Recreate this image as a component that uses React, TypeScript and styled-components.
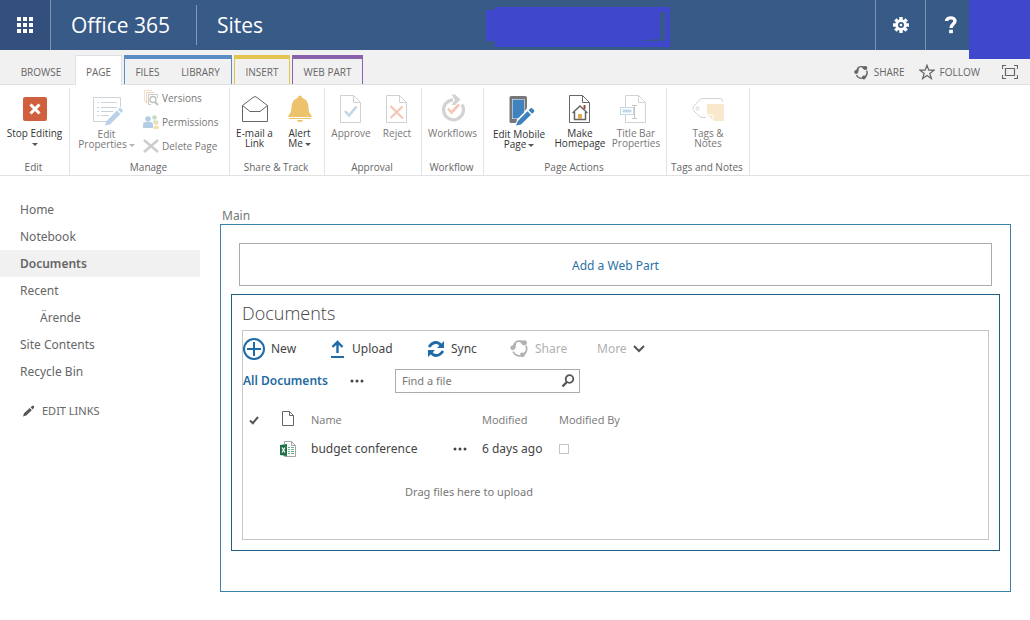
import React from "react";
import styled, { createGlobalStyle, css } from "styled-components";

const GlobalStyle = createGlobalStyle`
  * { box-sizing: border-box; }
  body {
    margin: 0;
    background: #fff;
    color: #666;
    font: 12px/16px "Noto Sans", "Open Sans", sans-serif;
  }
  button, input { font: inherit; color: inherit; }
  button { background: none; border: 0; padding: 0; cursor: pointer; white-space: nowrap; }
  a { color: inherit; text-decoration: none; }
  ul { list-style: none; margin: 0; padding: 0; }
  svg { display: block; flex: none; }
`;

const uiFont = `"Open Sans", "Noto Sans", sans-serif`;

/* ---------- suite bar ---------- */
const SuiteBar = styled.header`
  position: relative;
  display: flex;
  align-items: center;
  height: 50px;
  background: #385a87;
  color: #fff;
  font-family: ${uiFont};
`;
const Launcher = styled.button`
  display: grid;
  place-items: center;
  width: 51px;
  height: 50px;
  background: #32507b;
  border-right: 1px solid #7d94b3;
`;
const Brand = styled.a`
  width: 146px;
  padding-left: 20px;
  border-right: 1px solid #8499b7;
  font-size: 21px;
  line-height: 40px;
`;
const SiteName = styled(Brand)`
  width: auto;
  border: 0;
`;
const SuiteCenter = styled.div`
  flex: 1;
  display: flex;
  justify-content: center;
  padding: 4px 0 0 18px;
`;
const SuiteButton = styled.button`
  display: grid;
  place-items: center;
  width: 50px;
  height: 50px;
  border-left: 1px solid #7d94b3;
`;
const AccountSpace = styled.div`
  width: 55px;
`;
const AccountCover = styled.div`
  position: absolute;
  top: 0;
  right: 0;
  width: 61px;
  height: 59px;
  background: #3f48cc;
`;

/* ---------- ribbon tabs ---------- */
const TabRow = styled.div`
  display: flex;
  align-items: flex-end;
  height: 35px;
  background: #f1f1f1;
  border-bottom: 1px solid #e1e1e1;
  padding-left: 7px;
  font-family: ${uiFont};
`;
const TabGroup = styled.div<{ $color?: string }>`
  display: flex;
  height: 29px;
  margin-right: 2px;
  ${(p) =>
    p.$color &&
    css`
      border: 1px solid ${p.$color};
      border-top-width: 4px;
      border-bottom: 0;
    `}
`;
const Tab = styled.button<{ $w: number; $active?: boolean; $grouped?: boolean }>`
  width: ${(p) => p.$w}px;
  height: ${(p) => (p.$active ? 30 : p.$grouped ? 25 : 29)}px;
  padding-top: ${(p) => (p.$grouped ? 1 : 5)}px;
  font-size: 10px;
  ${(p) =>
    p.$active &&
    css`
      background: #fff;
      border: 1px solid #e1e1e1;
      border-bottom: 0;
      padding-top: 3px;
    `}
`;
const PageLinks = styled.div`
  display: flex;
  align-items: center;
  gap: 14px;
  margin-left: auto;
  padding: 0 12px 4px 0;
  font-size: 10px;
`;
const PageLink = styled.button`
  display: flex;
  align-items: center;
  gap: 5px;
`;
const FocusButton = styled.button`
  margin-left: 8px;
`;

/* ---------- ribbon ---------- */
const Ribbon = styled.div`
  display: flex;
  height: 91px;
  border-bottom: 1px solid #e1e1e1;
  font-family: ${uiFont};
  font-size: 10px;
`;
const Group = styled.section<{ $w: number }>`
  display: flex;
  flex-direction: column;
  width: ${(p) => p.$w}px;
  margin-top: 3px;
  padding-top: 5px;
  border-right: 1px solid #e3e3e3;
`;
const GroupBody = styled.div<{ $start?: boolean }>`
  flex: 1;
  display: flex;
  justify-content: ${(p) => (p.$start ? "flex-start" : "center")};
  align-items: flex-start;
`;
const GroupLabel = styled.h2`
  margin: 0;
  padding-right: 2px;
  font-size: 10px;
  font-weight: 400;
  line-height: 16px;
  text-align: center;
  white-space: nowrap;
`;
const LargeButton = styled.button<{ $w: number; $off?: boolean }>`
  display: flex;
  flex-direction: column;
  align-items: center;
  gap: 3px;
  width: ${(p) => p.$w}px;
  line-height: 10px;
  color: ${(p) => (p.$off ? "#777" : "#333")};
  svg { opacity: ${(p) => (p.$off ? 0.8 : 1)}; }
`;
const Caret = styled.span<{ $off?: boolean }>`
  display: inline-block;
  margin-left: 2px;
  border: 3px solid transparent;
  border-top-color: ${(p) => (p.$off ? "#b5b5b5" : "#555")};
  border-bottom: 0;
  vertical-align: 1px;
`;
const SmallButtons = styled.div`
  display: flex;
  flex-direction: column;
  gap: 8px;
  margin-top: -3px;
`;
const SmallButton = styled.button`
  display: flex;
  align-items: center;
  gap: 3px;
  line-height: 16px;
  color: #777;
  svg { opacity: 0.85; }
`;

/* ---------- page body ---------- */
const Body = styled.div`
  display: flex;
  gap: 20px;
  padding-right: 19px;
`;
const SideNav = styled.nav`
  width: 200px;
  padding-top: 20px;
`;
const NavItem = styled.a<{ $active?: boolean; $level?: number }>`
  display: block;
  padding-left: ${(p) => (p.$level ? 40 : 20)}px;
  line-height: 27px;
  ${(p) =>
    p.$active &&
    css`
      background: #f1f1f1;
      font-weight: 600;
    `}
`;
const EditLinks = styled.button`
  display: flex;
  align-items: center;
  gap: 7px;
  margin: 18px 0 0 22px;
  font-size: 11px;
`;
const Main = styled.main`
  flex: 1;
  padding-top: 32px;
`;
const ZoneTitle = styled.h2`
  margin: 0 2px;
  font-size: 12px;
  font-weight: 400;
  color: #777;
`;
const Zone = styled.div`
  padding: 18px 10px 40px;
  border: 1px solid #3c81a8;
`;
const AddWebPart = styled.button`
  display: block;
  width: calc(100% - 16px);
  height: 43px;
  margin: 0 8px 8px;
  padding-top: 2px;
  border: 1px solid #ababab;
  color: #2a72a5;
`;
const WebPart = styled.section`
  padding: 7px 10px 10px;
  border: 1px solid #1d5f85;
`;
const WebPartTitle = styled.h1`
  margin: 0;
  font-family: ${uiFont};
  font-size: 18px;
  font-weight: 300;
  line-height: 22px;
  padding-bottom: 6px;
  color: #444;
`;
const Library = styled.div`
  min-height: 210px;
  border: 1px solid #c6c6c6;
`;
const Commands = styled.div`
  display: flex;
  align-items: center;
  height: 35px;
`;
const Command = styled.button<{ $w: number; $off?: boolean }>`
  display: flex;
  align-items: center;
  gap: 6px;
  width: ${(p) => p.$w}px;
  color: ${(p) => (p.$off ? "#b1b1b1" : "#444")};
`;
const Views = styled.div`
  display: flex;
  align-items: center;
  height: 30px;
`;
const ViewName = styled.a`
  width: 107px;
  font-weight: 600;
  color: #1f6ba0;
`;
const Dots = styled.button`
  display: block;
  width: 14px;
  color: #444;
`;
const Search = styled.form`
  display: flex;
  align-items: center;
  width: 185px;
  height: 24px;
  margin-left: 31px;
  padding: 0 4px 0 6px;
  border: 1px solid #ababab;
`;
const SearchInput = styled.input`
  flex: 1;
  min-width: 0;
  border: 0;
  padding: 0;
  outline: 0;
  background: none;
  font-size: 11px;
  &::placeholder { color: #777; opacity: 1; }
`;
const Files = styled.table`
  table-layout: fixed;
  width: 409px;
  margin-top: 10px;
  border-collapse: collapse;
  th, td { padding: 0; text-align: left; white-space: nowrap; }
  th { height: 28px; font: 400 11px/16px ${uiFont}; color: #777; }
  td { height: 30px; color: #444; }
`;
const SelectCell = styled.div`
  padding-left: 6px;
`;
const TypeCell = styled.div`
  padding: 0 0 3px 2px;
`;
const RowBox = styled.input`
  appearance: none;
  display: block;
  width: 10px;
  height: 10px;
  margin: 0;
  border: 1px solid #c6c6c6;
`;
const DropHint = styled.p`
  width: 452px;
  margin: 20px 0 0;
  font-size: 11px;
  text-align: center;
  color: #777;
`;

/* ---------- icons ---------- */
const WaffleIcon = () => (
  <svg width="16" height="16" fill="#fff">
    {[0, 6, 12].map((y) => [0, 6, 12].map((x) => <rect key={x + "-" + y} x={x} y={y} width="4" height="4" />))}
  </svg>
);
const Redaction = () => (
  <svg width="185" height="40" fill="#3f48cc">
    <path d="M9 0H184V40H9V34H0V3H9ZM174 5V32L150 34H179V5Z" fillRule="evenodd" />
  </svg>
);
const GearIcon = () => (
  <svg width="16" height="16" viewBox="-8 -8 16 16" fill="#fff">
    {[0, 45, 90, 135].map((a) => (
      <rect key={a} x="-1.7" y="-8" width="3.4" height="16" transform={`rotate(${a})`} />
    ))}
    <circle r="5.8" />
    <circle r="3" fill="#385a87" />
    <circle r="1.3" />
  </svg>
);
const HelpIcon = () => (
  <svg width="14" height="18" viewBox="0 0 14 18" fill="none" stroke="#fff" strokeWidth="3.4">
    <path d="M2.5 5C2.5 0.8 11 0.8 11 5C11 8 7 8 7 12" />
    <path d="M7 13.8V17.2" strokeWidth="3.8" />
  </svg>
);
const ShareIcon = ({ size, color }: { size: number; color: string }) => (
  <svg width={size} height={size} viewBox="0 0 18 18" fill="none" stroke={color} strokeWidth="1.6">
    <path d="M5 3.2A7 7 0 0 1 11 2.3M15.2 6.5A7 7 0 0 1 14.2 13.4M10 16A7 7 0 0 1 3 12" />
    <g fill={color} stroke="none">
      <circle cx="2.6" cy="8.4" r="2.3" />
      <circle cx="13.6" cy="3.6" r="2.4" />
      <circle cx="11.8" cy="15" r="2.3" />
      <path d="M1.5 8L4.5 2.5L6 4L5 9ZM9 1.3L14 2L12 5.5L10 3.6ZM16.2 11L14.5 15L11 14.5L13.8 12.5Z" />
    </g>
  </svg>
);
const StarIcon = () => (
  <svg width="16" height="16" viewBox="0 0 16 16" fill="none" stroke="#666" strokeWidth="1.2">
    <path d="M8 1.2L9.8 6.2H15L10.8 9.4L12.4 14.6L8 11.5L3.6 14.6L5.2 9.4L1 6.2H6.2Z" />
  </svg>
);
const FocusIcon = () => (
  <svg width="16" height="14" viewBox="0 0 16 14" fill="none" stroke="#666">
    <path d="M.5 4V.5H4M12 .5H15.5V4M15.5 10V13.5H12M4 13.5H.5V10M3.5 3.5H12.5V10.5H3.5Z" strokeWidth="1.2" />
  </svg>
);
const StopIcon = () => (
  <svg width="32" height="32">
    <rect x="4" y="4" width="24" height="24" rx="2" fill="#d0603d" />
    <path d="M11.5 11.5L20.5 20.5M20.5 11.5L11.5 20.5" stroke="#fff" strokeWidth="3" />
  </svg>
);
const EditPropertiesIcon = () => (
  <svg width="32" height="33" fill="none" stroke="#c4c8cc">
    <path d="M16 28.5H2.5V4.5H29.5V14" />
    <path d="M6 9.5H8M10 9.5H26M6 14.5H8M10 14.5H26M6 18.5H8M10 18.5H22M6 22.5H8M10 22.5H18" stroke="#b9c9d8" />
    <path d="M14 32.5L15.5 28L26 17.5L29.5 21L19 31.5Z M27 16.5L29 14.5L32 17.5L30.5 20Z" fill="#a9c6e2" stroke="none" />
  </svg>
);
const VersionsIcon = () => (
  <svg width="16" height="16" fill="none">
    <path d="M8 11.5H1.5V.5H9" stroke="#f3dfb8" />
    <path d="M3.5 13.5V2.5H11" stroke="#edc9bd" />
    <path d="M8 14.5H5.5V4.5H14.5V8" stroke="#c4c4c4" />
    <circle cx="10" cy="9.5" r="3" stroke="#b5b5b5" strokeWidth="1.3" />
    <path d="M12 12L15 15" stroke="#b5b5b5" strokeWidth="2" />
  </svg>
);
const PermissionsIcon = () => (
  <svg width="16" height="16">
    <circle cx="5" cy="5" r="2.8" fill="#a9c6e2" />
    <path d="M0 14V10Q0 8 3 8H7Q10 8 10 10V14Z" fill="#a9c6e2" />
    <circle cx="11.5" cy="3.5" r="2.3" fill="#b7d9b9" />
    <path d="M10 6.5H13Q15.5 6.500 15.500 9.500H11Z" fill="#b7d9b9" />
    <circle cx="13" cy="9.5" r="2" fill="#f5dca6" />
    <path d="M10.5 15V13Q10.5 12 12 12H14Q16 12 16 13V15Z" fill="#f5dca6" />
  </svg>
);
const DeleteIcon = () => (
  <svg width="16" height="16" stroke="#c4c4c4" strokeWidth="2.4">
    <path d="M1 2L15 14M15 2L1 14" />
  </svg>
);
const MailIcon = () => (
  <svg width="32" height="32" fill="none" stroke="#666">
    <path d="M3.5 12.5V28.5H28.5V12.5M3.5 12.5L14 4.5Q16 2.5 18 4.5L28.5 12.5L21 18.5H11Z" />
  </svg>
);
const BellIcon = () => (
  <svg width="32" height="32" fill="#ecc26c">
    <path d="M13.5 5Q14 2.5 16 2.5T18.5 5Q24 6.5 24.5 14C24.7 19 25.5 20 27.5 22.5V24H4.5V22.5C6.5 20 7.3 19 7.5 14Q8 6.5 13.5 5Z" />
    <path d="M5 25H27V26H5ZM13 27H19Q18.5 29 16 29T13 27Z" />
  </svg>
);
const PageOutline = ({ color }: { color: string }) => (
  <path d="M5.5 2.5H18.5L25.5 9.5V29.5H5.5ZM18.5 2.5V9.5H25.5" fill="none" stroke={color} />
);
const ApproveIcon = () => (
  <svg width="32" height="32" fill="none">
    <PageOutline color="#c6c6c6" />
    <path d="M10 18L14 22.5L21.5 13.5" stroke="#b4cfe0" strokeWidth="2.6" />
  </svg>
);
const RejectIcon = () => (
  <svg width="32" height="32" fill="none">
    <PageOutline color="#c6c6c6" />
    <path d="M9.5 13L22 25.5M21.5 13.5L9.5 25" stroke="#f1b8a5" strokeWidth="2.2" />
  </svg>
);
const WorkflowIcon = () => (
  <svg width="32" height="32" fill="none">
    <path d="M16 6.8A10 10 0 1 0 25 11.5" stroke="#c9c9c9" strokeWidth="3.2" />
    <path d="M14.5 1.5H18L23.500 6.500L18 12H14.500L18 7Z" fill="#c9c9c9" />
    <path d="M11 15.5L14.5 19.5L22 11.5" stroke="#f1b8a5" strokeWidth="2.6" />
  </svg>
);
const MobileIcon = () => (
  <svg width="32" height="33">
    <path d="M8 3H22Q24 3 24 5V15L13 30H8Q6.5 30 6.5 28.5V4.5Q6.5 3 8 3Z" fill="#777" />
    <rect x="9" y="6" width="12.5" height="20" fill="#fff" />
    <rect x="9.500" y="6.500" width="11.5" height="19" fill="#3f82be" />
    <path d="M12 34L14 26.5L26 14.5L32.5 20L20 31Z" fill="#fff" />
    <path d="M13 32.5L14.8 28L24.5 18.3L28 21.8L18 31.5ZM25.5 17.2L27.5 15.2Q28.5 14.5 29.5 15.5L31 17Q31.8 18 31 19L29.2 20.8Z" fill="#3f82be" />
  </svg>
);
const HomepageIcon = () => (
  <svg width="32" height="32" fill="none">
    <PageOutline color="#666" />
    <path d="M20.5 12V16" stroke="#9b4a33" strokeWidth="2" />
    <path d="M8.5 20L16 13L23.5 20M10.5 19V26.5H21.5V19" stroke="#666" strokeWidth="1.5" />
    <rect x="14" y="21" width="4" height="5" fill="#e0ab5c" />
  </svg>
);
const TitleBarIcon = () => (
  <svg width="32" height="32" fill="none">
    <PageOutline color="#c9c9c9" />
    <rect x=".5" y="14.5" width="13" height="7" fill="#fff" stroke="#b4cfe0" />
    <rect x="2.5" y="16.5" width="9" height="3" fill="#b4cfe0" />
    <path d="M12 12.5H14Q14.5 12.500 14.500 13.500V24.500Q14.500 25.500 14 25.500H12M17 12.500H15Q14.500 12.500 14.500 13.500V24.500Q14.500 25.500 15 25.500H17" stroke="#b5b5b5" />
  </svg>
);
const TagsIcon = () => (
  <svg width="34" height="32" fill="none">
    <path d="M31.5 9V7.5Q31 5.5 29 5.5H12Q10 5.5 8.5 7L2.5 13.5Q1.5 15.5 2.5 17.5L8 23Q9.5 24.5 12 24.5H15" stroke="#c9c9c9" />
    <circle cx="6.5" cy="15.5" r="1.5" stroke="#c9c9c9" />
    <path d="M16 11H33V28H23L16 22Z" fill="#f8e4c0" />
    <path d="M16 22H22V28" stroke="#fff" />
  </svg>
);
const PencilIcon = () => (
  <svg width="13" height="12" viewBox="0 0 13 12" fill="#555">
    <path d="M1 11.5L2 8.3L7.8 3L9.8 5.2L4.2 10.5ZM8.6 2.2L10.4.7Q11.2.3 11.8 1T12 2.7L10.6 4.4Z" />
  </svg>
);
const NewIcon = () => (
  <svg width="22" height="22" fill="none" stroke="#1f6ba8" strokeWidth="2">
    <circle cx="11" cy="11" r="10" />
    <path d="M11 4V18M4 11H18" />
  </svg>
);
const UploadIcon = () => (
  <svg width="16" height="18" fill="none" stroke="#1f6ba8">
    <path d="M7.5 13V2M2.5 7L7.5 2L12.5 7" strokeWidth="2.4" />
    <path d="M1 17H14" strokeWidth="2" />
  </svg>
);
const SyncIcon = () => (
  <svg width="18" height="18" fill="none" stroke="#1f6ba8" strokeWidth="2.8">
    <path d="M2 7Q5 2.5 9 2.5Q12 2.5 14 5.5M16 11Q13 15.5 9 15.5Q6 15.5 4 12.5" />
    <path d="M17 1V8H10ZM1 17V10H8Z" fill="#1f6ba8" stroke="none" />
  </svg>
);
const ChevronIcon = () => (
  <svg width="12" height="8" fill="none" stroke="#555" strokeWidth="2">
    <path d="M1 1L6 6L11 1" />
  </svg>
);
const DotsIcon = () => (
  <svg width="14" height="4" fill="#444">
    <circle cx="2" cy="2" r="1.5" />
    <circle cx="7" cy="2" r="1.5" />
    <circle cx="12" cy="2" r="1.5" />
  </svg>
);
const SearchIcon = () => (
  <svg width="14" height="14" fill="none" stroke="#555">
    <circle cx="8.5" cy="5" r="3.8" strokeWidth="1.8" />
    <path d="M5.8 8L1.5 12.5" strokeWidth="2.4" />
  </svg>
);
const CheckIcon = () => (
  <svg width="10" height="9" fill="none" stroke="#555" strokeWidth="2">
    <path d="M1 4.5L3.8 7.2L9 1" />
  </svg>
);
const DocIcon = () => (
  <svg width="12" height="15" fill="none" stroke="#666">
    <path d="M.5 .5H7.5L11.5 4.5V14.5H.5ZM7.5 .5V4.5H11.5" />
  </svg>
);
const ExcelIcon = () => (
  <svg width="17" height="17" fill="none">
    <path d="M4.5 3V.5H11.5L15.5 4.5V15.5H4.5V14M11.5 .5V4.5H15.5" stroke="#a5a5a5" />
    <path d="M8 6.5H10M11 6.5H14M8 8.5H10M11 8.5H14M8 10.5H10M11 10.5H14M8 12.5H10M11 12.5H14" stroke="#6cb08d" />
    <path d="M0 4L7 3V15L0 14Z" fill="#1f7244" />
    <path d="M2 6.5L5 11.5M5 6.5L2 11.5" stroke="#fff" strokeWidth="1.2" />
  </svg>
);

export default function App() {
  return (
    <>
      <GlobalStyle />
      <SuiteBar>
        <Launcher aria-label="App launcher"><WaffleIcon /></Launcher>
        <Brand href="#">Office 365</Brand>
        <SiteName href="#">Sites</SiteName>
        <SuiteCenter><Redaction /></SuiteCenter>
        <SuiteButton aria-label="Settings"><GearIcon /></SuiteButton>
        <SuiteButton aria-label="Help"><HelpIcon /></SuiteButton>
        <AccountSpace />
        <AccountCover />
      </SuiteBar>

      <TabRow>
        <Tab $w={68}>BROWSE</Tab>
        <TabGroup><Tab $w={47} $active>PAGE</Tab></TabGroup>
        <TabGroup $color="#5b8cc2">
          <Tab $w={45} $grouped>FILES</Tab>
          <Tab $w={61} $grouped>LIBRARY</Tab>
        </TabGroup>
        <TabGroup $color="#e3c44e"><Tab $w={54} $grouped>INSERT</Tab></TabGroup>
        <TabGroup $color="#8a62ab"><Tab $w={69} $grouped>WEB PART</Tab></TabGroup>
        <PageLinks>
          <PageLink><ShareIcon size={15} color="#666" />SHARE</PageLink>
          <PageLink><StarIcon />FOLLOW</PageLink>
          <FocusButton aria-label="Focus on content"><FocusIcon /></FocusButton>
        </PageLinks>
      </TabRow>

      <Ribbon>
        <Group $w={70}>
          <GroupBody>
            <LargeButton $w={66}><StopIcon /><span>Stop Editing<br /><Caret /></span></LargeButton>
          </GroupBody>
          <GroupLabel>Edit</GroupLabel>
        </Group>
        <Group $w={160}>
          <GroupBody $start>
            <LargeButton $w={73} $off><EditPropertiesIcon /><span>Edit<br />Properties<Caret $off /></span></LargeButton>
            <SmallButtons>
              <SmallButton><VersionsIcon />Versions</SmallButton>
              <SmallButton><PermissionsIcon />Permissions</SmallButton>
              <SmallButton><DeleteIcon />Delete Page</SmallButton>
            </SmallButtons>
          </GroupBody>
          <GroupLabel>Manage</GroupLabel>
        </Group>
        <Group $w={95}>
          <GroupBody>
            <LargeButton $w={45}><MailIcon /><span>E-mail a<br />Link</span></LargeButton>
            <LargeButton $w={45}><BellIcon /><span>Alert<br />Me<Caret /></span></LargeButton>
          </GroupBody>
          <GroupLabel>Share &amp; Track</GroupLabel>
        </Group>
        <Group $w={97}>
          <GroupBody>
            <LargeButton $w={48} $off><ApproveIcon />Approve</LargeButton>
            <LargeButton $w={44} $off><RejectIcon />Reject</LargeButton>
          </GroupBody>
          <GroupLabel>Approval</GroupLabel>
        </Group>
        <Group $w={62}>
          <GroupBody>
            <LargeButton $w={60} $off><WorkflowIcon />Workflows</LargeButton>
          </GroupBody>
          <GroupLabel>Workflow</GroupLabel>
        </Group>
        <Group $w={183}>
          <GroupBody>
            <LargeButton $w={64}><MobileIcon /><span>Edit Mobile<br />Page<Caret /></span></LargeButton>
            <LargeButton $w={58}><HomepageIcon /><span>Make<br />Homepage</span></LargeButton>
            <LargeButton $w={54} $off><TitleBarIcon /><span>Title Bar<br />Properties</span></LargeButton>
          </GroupBody>
          <GroupLabel>Page Actions</GroupLabel>
        </Group>
        <Group $w={83}>
          <GroupBody>
            <LargeButton $w={60} $off><TagsIcon /><span>Tags &amp;<br />Notes</span></LargeButton>
          </GroupBody>
          <GroupLabel>Tags and Notes</GroupLabel>
        </Group>
      </Ribbon>

      <Body>
        <SideNav>
          <ul>
            <li><NavItem href="#">Home</NavItem></li>
            <li><NavItem href="#">Notebook</NavItem></li>
            <li><NavItem href="#" $active>Documents</NavItem></li>
            <li><NavItem href="#">Recent</NavItem></li>
            <li><NavItem href="#" $level={1}>Ärende</NavItem></li>
            <li><NavItem href="#">Site Contents</NavItem></li>
            <li><NavItem href="#">Recycle Bin</NavItem></li>
          </ul>
          <EditLinks><PencilIcon />EDIT LINKS</EditLinks>
        </SideNav>
        <Main>
          <ZoneTitle>Main</ZoneTitle>
          <Zone>
            <AddWebPart>Add a Web Part</AddWebPart>
            <WebPart>
              <WebPartTitle>Documents</WebPartTitle>
              <Library>
                <Commands>
                  <Command $w={87}><NewIcon />New</Command>
                  <Command $w={97}><UploadIcon />Upload</Command>
                  <Command $w={83}><SyncIcon />Sync</Command>
                  <Command $w={87} $off><ShareIcon size={19} color="#b1b1b1" />Share</Command>
                  <Command $w={50} $off>More<ChevronIcon /></Command>
                </Commands>
                <Views>
                  <ViewName href="#">All Documents</ViewName>
                  <Dots aria-label="More views"><DotsIcon /></Dots>
                  <Search>
                    <SearchInput type="text" aria-label="Find a file" placeholder="Find a file" />
                    <button type="button" aria-label="Search"><SearchIcon /></button>
                  </Search>
                </Views>
                <Files>
                  <colgroup>
                    <col width="37" />
                    <col width="31" />
                    <col width="142" />
                    <col width="29" />
                    <col width="77" />
                    <col />
                  </colgroup>
                  <thead>
                    <tr>
                      <th aria-label="Selected"><SelectCell><CheckIcon /></SelectCell></th>
                      <th aria-label="Type"><TypeCell><DocIcon /></TypeCell></th>
                      <th>Name</th>
                      <th aria-label="Actions" />
                      <th>Modified</th>
                      <th>Modified By</th>
                    </tr>
                  </thead>
                  <tbody>
                    <tr>
                      <td />
                      <td><ExcelIcon /></td>
                      <td>budget conference</td>
                      <td><Dots aria-label="Open menu"><DotsIcon /></Dots></td>
                      <td>6 days ago</td>
                      <td><RowBox type="checkbox" aria-label="Modified by presence" /></td>
                    </tr>
                  </tbody>
                </Files>
                <DropHint>Drag files here to upload</DropHint>
              </Library>
            </WebPart>
          </Zone>
        </Main>
      </Body>
    </>
  );
}
